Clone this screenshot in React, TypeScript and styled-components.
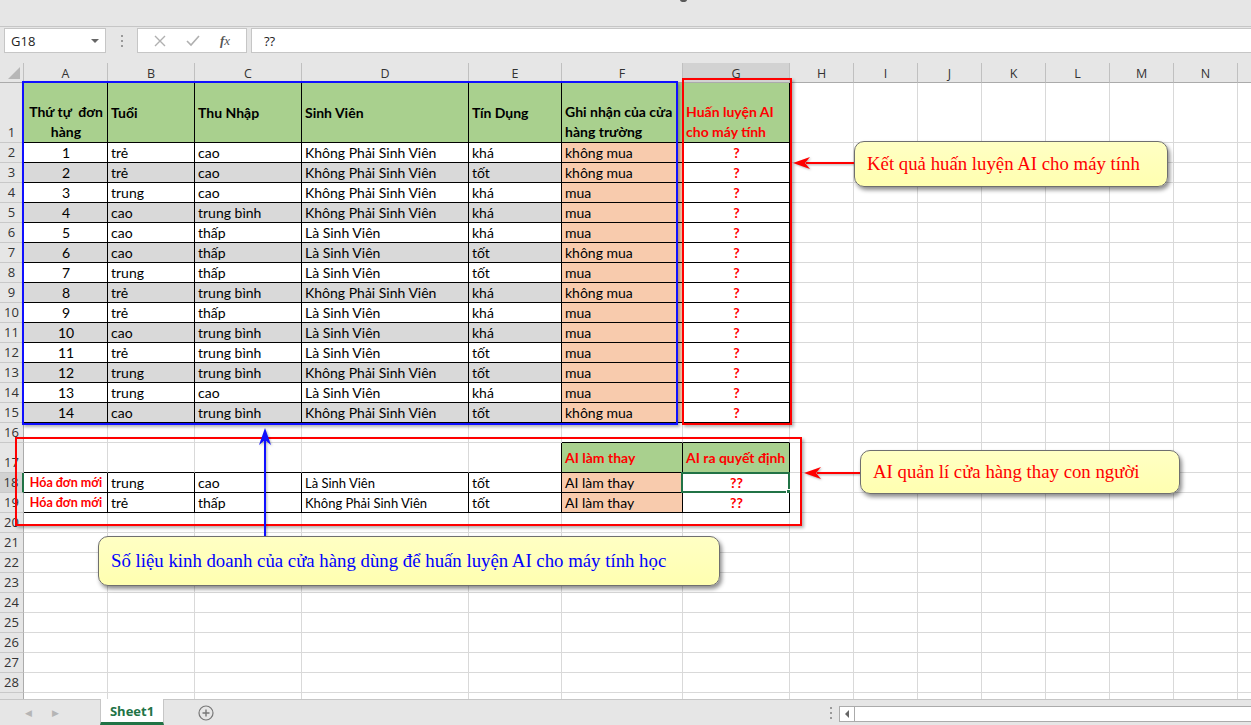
import React from "react";
import styled, { createGlobalStyle } from "styled-components";

const GlobalStyle = createGlobalStyle`
  html, body { margin: 0; padding: 0; background: #fff; }
  body { font-family: Lato, "Noto Sans", sans-serif; color: #000; }
`;

const GREEN = "#A9D08E";
const GRAY = "#D9D9D9";
const PEACH = "#F8CBAD";
const RED = "#FF0000";

// last column is only a sliver at the window edge, its letter is off-screen
const COLS = ["A", "B", "C", "D", "E", "F", "G", "H", "I", "J", "K", "L", "M", "N", ""];

const orders = [
  ["trẻ", "cao", "Không Phải Sinh Viên", "khá", "không mua"],
  ["trẻ", "cao", "Không Phải Sinh Viên", "tốt", "không mua"],
  ["trung", "cao", "Không Phải Sinh Viên", "khá", "mua"],
  ["cao", "trung bình", "Không Phải Sinh Viên", "khá", "mua"],
  ["cao", "thấp", "Là Sinh Viên", "khá", "mua"],
  ["cao", "thấp", "Là Sinh Viên", "tốt", "không mua"],
  ["trung", "thấp", "Là Sinh Viên", "tốt", "mua"],
  ["trẻ", "trung bình", "Không Phải Sinh Viên", "khá", "không mua"],
  ["trẻ", "thấp", "Là Sinh Viên", "khá", "mua"],
  ["cao", "trung bình", "Là Sinh Viên", "khá", "mua"],
  ["trẻ", "trung bình", "Là Sinh Viên", "tốt", "mua"],
  ["trung", "trung bình", "Không Phải Sinh Viên", "tốt", "mua"],
  ["trung", "cao", "Là Sinh Viên", "khá", "mua"],
  ["cao", "trung bình", "Không Phải Sinh Viên", "tốt", "không mua"],
];

const newOrders = [
  ["trung", "cao", "Là Sinh Viên", "tốt"],
  ["trẻ", "thấp", "Không Phải Sinh Viên", "tốt"],
];

const headers: { lines: string[]; align: string; red?: boolean }[] = [
  { lines: ["Thứ tự  đơn", "hàng"], align: "center" },
  { lines: ["Tuổi"], align: "left" },
  { lines: ["Thu Nhập"], align: "left" },
  { lines: ["Sinh Viên"], align: "left" },
  { lines: ["Tín Dụng"], align: "left" },
  { lines: ["Ghi nhận của cửa", "hàng trường"], align: "left" },
  { lines: ["Huấn luyện AI", "cho máy tính"], align: "left", red: true },
];

type CellSpec = {
  text?: React.ReactNode;
  bg?: string;
  color?: string;
  bold?: boolean;
  align?: string;
  bottom?: boolean;
  size?: number;
  br?: boolean;
  bb?: boolean;
  selected?: boolean;
};

function cellSpec(row: number, col: number): CellSpec {
  const inTable = col <= 6;
  if (row === 1 && inTable) {
    const h = headers[col];
    return {
      text: h.lines.map((l, i) => <span key={i}>{l}</span>),
      bg: GREEN,
      bold: true,
      color: h.red ? RED : "#000",
      align: h.align,
      bottom: h.lines.length > 1,
      br: true,
      bb: true,
    };
  }
  if (row >= 2 && row <= 15 && inTable) {
    const d = orders[row - 2];
    const gray = row % 2 === 1;
    if (col === 0) return { text: row - 1, align: "center", bg: gray ? GRAY : "#fff", br: true, bb: true };
    if (col === 5) return { text: d[4], bg: PEACH, br: true, bb: true };
    if (col === 6) return { text: "?", color: RED, bold: true, align: "center", br: true, bb: true };
    return { text: d[col - 1], bg: gray ? GRAY : "#fff", br: true, bb: true };
  }
  if (row === 16 && (col === 5 || col === 6)) return { bb: true };
  if (row === 17 && inTable) {
    if (col === 5) return { text: "AI làm thay", bg: GREEN, bold: true, color: RED, br: true, bb: true };
    if (col === 6) return { text: "AI ra quyết định", bg: GREEN, bold: true, color: RED, br: true, bb: true };
    return { bb: true, br: col === 4 };
  }
  if ((row === 18 || row === 19) && inTable) {
    const d = newOrders[row - 18];
    if (col === 0) return { text: "Hóa đơn mới", color: RED, bold: true, size: 12.5, align: "center", br: true, bb: true };
    if (col === 5) return { text: "AI làm thay", bg: PEACH, br: true, bb: true };
    if (col === 6) return { text: "??", color: RED, bold: true, align: "center", br: true, bb: true, selected: row === 18 };
    return { text: d[col - 1], size: col === 3 ? 13 : 14, br: true, bb: true };
  }
  return {};
}

const Window = styled.div`
  position: relative;
  width: 1251px;
  height: 725px;
  overflow: hidden;
  display: flex;
  flex-direction: column;
  background: #fff;
`;

const TitleStrip = styled.div`
  height: 26px;
  background: #e6e6e6;
  border-bottom: 1px solid #c6c6c6;
  position: relative;
`;

const TopNub = styled.div`
  position: absolute;
  left: 680px;
  top: -3px;
  width: 7px;
  height: 5px;
  border-radius: 50%;
  background: #5a5a5a;
`;

const FormulaBar = styled.div`
  height: 36px;
  box-sizing: border-box;
  padding: 1px 0 0 4px;
  background: #e6e6e6;
  display: flex;
  align-items: flex-start;
  font-family: "Segoe UI", "Open Sans", sans-serif;
`;

const NameBox = styled.div`
  width: 102px;
  height: 25px;
  box-sizing: border-box;
  background: #fff;
  border: 1px solid #c6c6c6;
  display: flex;
  align-items: center;
  justify-content: space-between;
  padding: 0 6px 0 6px;
  font-size: 13px;
  color: #222;
`;

const Caret = styled.span`
  width: 0;
  height: 0;
  border-left: 4px solid transparent;
  border-right: 4px solid transparent;
  border-top: 4px solid #666;
`;

const Grip = styled.div`
  width: 31px;
  display: flex;
  flex-direction: column;
  align-items: center;
  justify-content: center;
  gap: 3px;
  height: 25px;
  span {
    width: 2px;
    height: 2px;
    background: #999;
  }
`;

const FxGroup = styled.div`
  width: 110px;
  height: 25px;
  box-sizing: border-box;
  background: #fff;
  border: 1px solid #c6c6c6;
  display: flex;
  align-items: center;
  justify-content: space-around;
  padding: 0 6px;
  color: #bbb;
`;

const FxLabel = styled.span`
  font-family: "Liberation Serif", serif;
  font-style: italic;
  font-size: 13px;
  color: #555;
`;

const FormulaInput = styled.div`
  flex: 1;
  margin-left: 4px;
  height: 25px;
  box-sizing: border-box;
  background: #fff;
  border: 1px solid #c6c6c6;
  border-right: none;
  display: flex;
  align-items: center;
  padding-left: 12px;
  font-size: 13px;
  color: #222;
`;

const Sheet = styled.div`
  flex: 1;
  overflow: hidden;
  display: grid;
  grid-template-columns: 24px 84px 87px 107px 167px 93px 121px 107px repeat(8, 64px);
  grid-template-rows: 20px 60px repeat(15, 20px) 30px;
  grid-auto-rows: 20px;
  background: #fff;
`;

const Corner = styled.div`
  position: relative;
  background: #e6e6e6;
  border-right: 1px solid #c0c0c0;
  border-bottom: 1px solid #ababab;
  box-sizing: border-box;
  &::after {
    content: "";
    position: absolute;
    right: 3px;
    bottom: 3px;
    border-left: 12px solid transparent;
    border-bottom: 12px solid #b7b7b7;
  }
`;

const ColHead = styled.div<{ $sel?: boolean }>`
  box-sizing: border-box;
  background: ${(p) => (p.$sel ? "#d2d2d2" : "#e6e6e6")};
  border-right: 1px solid #c0c0c0;
  border-bottom: 1px solid #ababab;
  display: flex;
  align-items: center;
  justify-content: center;
  font-family: "Segoe UI", "Open Sans", sans-serif;
  font-size: 12.5px;
  color: #333;
  padding-top: 1px;
`;

const RowHead = styled.div<{ $sel?: boolean }>`
  box-sizing: border-box;
  background: ${(p) => (p.$sel ? "#d2d2d2" : "#e6e6e6")};
  border-bottom: 1px solid #c8c8c8;
  border-right: ${(p) => (p.$sel ? "2px solid #217346" : "1px solid #ababab")};
  display: flex;
  align-items: flex-end;
  justify-content: center;
  font-family: "Segoe UI", "Open Sans", sans-serif;
  font-size: 13px;
  color: #333;
  line-height: 19px;
`;

const Cell = styled.div<{
  $bg?: string;
  $color?: string;
  $bold?: boolean;
  $align?: string;
  $bottom?: boolean;
  $size?: number;
  $br?: boolean;
  $bb?: boolean;
  $selected?: boolean;
}>`
  position: relative;
  box-sizing: border-box;
  display: flex;
  flex-direction: column;
  justify-content: ${(p) => (p.$bottom ? "flex-end" : "center")};
  align-items: ${(p) => (p.$align === "center" ? "center" : "flex-start")};
  padding: 1px 2px 0 3px;
  background: ${(p) => p.$bg || "#fff"};
  color: ${(p) => p.$color || "#000"};
  font-size: ${(p) => p.$size || 14}px;
  font-weight: ${(p) => (p.$bold ? 700 : 400)};
  border-right: 1px solid ${(p) => (p.$br ? "#000" : "#d9d9d9")};
  border-bottom: 1px solid ${(p) => (p.$bb ? "#000" : "#d9d9d9")};
  line-height: 20px;
  white-space: pre;
  ${(p) =>
    p.$selected &&
    `
    &::before {
      content: "";
      position: absolute;
      inset: -1px -1px -1px -2px;
      border: 2px solid #217346;
    }
    &::after {
      content: "";
      position: absolute;
      right: -4px;
      bottom: -4px;
      width: 5px;
      height: 5px;
      background: #217346;
      border: 1px solid #fff;
    }
  `}
`;

const Frame = styled.div<{ $color: string; $l: number; $t: number; $w: number; $h: number }>`
  position: absolute;
  left: ${(p) => p.$l}px;
  top: ${(p) => p.$t}px;
  width: ${(p) => p.$w}px;
  height: ${(p) => p.$h}px;
  box-sizing: border-box;
  border: 2px solid ${(p) => p.$color};
  box-shadow: 2px 2px 3px rgba(0, 0, 0, 0.3);
  pointer-events: none;
`;

const Callout = styled.div<{ $l: number; $t: number; $w: number; $h: number; $color: string }>`
  position: absolute;
  left: ${(p) => p.$l}px;
  top: ${(p) => p.$t}px;
  width: ${(p) => p.$w}px;
  height: ${(p) => p.$h}px;
  box-sizing: border-box;
  background: linear-gradient(#ffffc4, #ffffb0);
  border: 1px solid #6f6f6f;
  border-radius: 10px;
  box-shadow: 2px 3px 4px rgba(0, 0, 0, 0.45);
  display: flex;
  align-items: center;
  padding-left: 12px;
  font-family: "Liberation Serif", "Times New Roman", serif;
  font-size: 18.8px;
  color: ${(p) => p.$color};
  white-space: nowrap;
`;

const ArrowSvg = styled.svg<{ $l: number; $t: number }>`
  position: absolute;
  left: ${(p) => p.$l}px;
  top: ${(p) => p.$t}px;
  overflow: visible;
  filter: drop-shadow(1px 1px 1px rgba(0, 0, 0, 0.3));
`;

const TabBar = styled.div`
  height: 26px;
  box-sizing: border-box;
  border-top: 1px solid #c6c6c6;
  background: #e6e6e6;
  display: flex;
  align-items: stretch;
  font-family: "Segoe UI", "Open Sans", sans-serif;
`;

const NavArrows = styled.div`
  width: 100px;
  display: flex;
  align-items: center;
  gap: 20px;
  padding-left: 25px;
  box-sizing: border-box;
  color: #b5b5b5;
  font-size: 9px;
`;

const SheetTab = styled.div`
  width: 64px;
  margin-top: -1px;
  background: #fff;
  border-left: 1px solid #c6c6c6;
  border-right: 1px solid #c6c6c6;
  border-bottom: 3px solid #217346;
  box-sizing: border-box;
  display: flex;
  align-items: center;
  justify-content: center;
  font-size: 13px;
  font-weight: 700;
  color: #217346;
`;

const AddSheet = styled.div`
  margin-left: 34px;
  display: flex;
  align-items: center;
  color: #777;
`;

const Spacer = styled.div`
  flex: 1;
`;

const TabGrip = styled(Grip)`
  width: 16px;
  height: auto;
  margin-right: 0;
`;

const HScroll = styled.div`
  width: 412px;
  margin: 6px 0 3px 0;
  box-sizing: border-box;
  background: #fff;
  border: 1px solid #ababab;
  border-right: none;
  display: flex;
`;

const ScrollBtn = styled.div`
  width: 14px;
  border-right: 1px solid #ababab;
  display: flex;
  align-items: center;
  justify-content: center;
  &::before {
    content: "";
    border-top: 4px solid transparent;
    border-bottom: 4px solid transparent;
    border-right: 4px solid #666;
  }
`;

export default function App() {
  const rows = Array.from({ length: 29 }, (_, i) => i + 1);
  return (
    <>
      <GlobalStyle />
      <Window>
        <TitleStrip>
          <TopNub />
        </TitleStrip>
        <FormulaBar>
          <NameBox>
            G18
            <Caret />
          </NameBox>
          <Grip>
            <span />
            <span />
            <span />
          </Grip>
          <FxGroup>
            <svg width="12" height="12" viewBox="0 0 12 12">
              <path d="M1 1 L11 11 M11 1 L1 11" stroke="#b0b0b0" strokeWidth="1.4" fill="none" />
            </svg>
            <svg width="14" height="12" viewBox="0 0 14 12">
              <path d="M1 6 L5 10 L13 1" stroke="#b0b0b0" strokeWidth="1.6" fill="none" />
            </svg>
            <FxLabel>
              <b>f</b>x
            </FxLabel>
          </FxGroup>
          <FormulaInput>??</FormulaInput>
        </FormulaBar>

        <Sheet>
          <Corner />
          {COLS.map((c, ci) => (
            <ColHead key={ci} $sel={c === "G"}>
              {c}
            </ColHead>
          ))}
          {rows.map((r) => (
            <React.Fragment key={r}>
              <RowHead $sel={r === 18}>{r <= 28 ? r : ""}</RowHead>
              {COLS.map((_, ci) => {
                const s = cellSpec(r, ci);
                return (
                  <Cell
                    key={ci}
                    $bg={s.bg}
                    $color={s.color}
                    $bold={s.bold}
                    $align={s.align}
                    $bottom={s.bottom}
                    $size={s.size}
                    $br={s.br}
                    $bb={s.bb}
                    $selected={s.selected}
                  >
                    {s.text}
                  </Cell>
                );
              })}
            </React.Fragment>
          ))}
        </Sheet>

        <TabBar>
          <NavArrows>
            <span>◀</span>
            <span>▶</span>
          </NavArrows>
          <SheetTab>Sheet1</SheetTab>
          <AddSheet>
            <svg width="16" height="16" viewBox="0 0 16 16">
              <circle cx="8" cy="8" r="7" stroke="#777" strokeWidth="1.2" fill="none" />
              <path d="M8 4.5 V11.5 M4.5 8 H11.5" stroke="#777" strokeWidth="1.4" />
            </svg>
          </AddSheet>
          <Spacer />
          <TabGrip>
            <span />
            <span />
            <span />
          </TabGrip>
          <HScroll>
            <ScrollBtn />
          </HScroll>
        </TabBar>

        {/* annotation overlays */}
        <Frame $color="#1010ff" $l={22} $t={81} $w={656} $h={344} />
        <Frame $color={RED} $l={682} $t={78} $w={110} $h={347} />
        <Frame $color={RED} $l={15} $t={437} $w={787} $h={89} />

        <ArrowSvg $l={792} $t={155} width="64" height="16">
          <path d="M14 8 H64" stroke={RED} strokeWidth="2" />
          <path d="M1 8 L18 2 L13 8 L18 14 Z" fill={RED} />
        </ArrowSvg>
        <ArrowSvg $l={803} $t={465} width="58" height="16">
          <path d="M14 8 H58" stroke={RED} strokeWidth="2" />
          <path d="M1 8 L18 2 L13 8 L18 14 Z" fill={RED} />
        </ArrowSvg>
        <ArrowSvg $l={257} $t={427} width="16" height="110">
          <path d="M8 12 V110" stroke="#1010ff" strokeWidth="2" />
          <path d="M8 1 L14 18 L8 13 L2 18 Z" fill="#1010ff" />
        </ArrowSvg>

        <Callout $l={854} $t={141} $w={314} $h={46} $color="#ff0000">
          Kết quả huấn luyện AI cho máy tính
        </Callout>
        <Callout $l={860} $t={450} $w={320} $h={44} $color="#ff0000">
          AI quản lí cửa hàng thay con người
        </Callout>
        <Callout $l={98} $t={536} $w={622} $h={50} $color="#0000ff">
          Số liệu kinh doanh của cửa hàng dùng để huấn luyện AI cho máy tính học
        </Callout>
      </Window>
    </>
  );
}
